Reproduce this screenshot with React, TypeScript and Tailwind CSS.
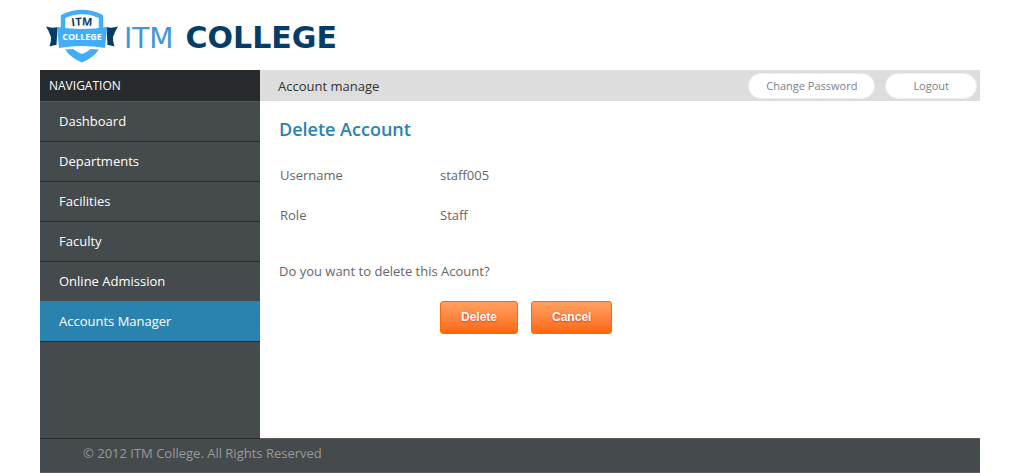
const navItems = [
  { label: 'Dashboard', style: 'border-[#565b5e]' },
  { label: 'Departments', style: 'border-[#272b2e]' },
  { label: 'Facilities', style: 'border-[#272b2e]' },
  { label: 'Faculty', style: 'border-[#272b2e]' },
  { label: 'Online Admission', style: 'border-[#272b2e]' },
  { label: 'Accounts Manager', style: 'border-[#2a83ae] bg-[#2a83ae]', current: true },
];

const details = [
  { label: 'Username', value: 'staff005' },
  { label: 'Role', value: 'Staff' },
];

function Crest() {
  return (
    <svg viewBox="0 0 74 56" className="h-14 w-[74px] shrink-0" aria-hidden="true">
      <path d="M0 18.5 Q6 20.5 11.5 19 L10.5 37 Q7 37 3.5 38.5 Q5.5 33 5 29 Q3 23 0 18.5 Z" fill="#043d68" />
      <path d="M72 18.5 Q66 20.5 60.5 19 L61.5 37 Q65 37 68.5 38.5 Q66.5 33 67 29 Q69 23 72 18.5 Z" fill="#043d68" />
      <path
        d="M17 23 V8.5 Q26 4 36 4 Q46 4 55 8.5 V23"
        fill="#fff"
        stroke="#42aefa"
        strokeWidth="4.5"
        strokeLinejoin="round"
      />
      <path d="M11 19 Q36 23 61 19 L59 40 Q36 36 13 40 Z" fill="#42aefa" />
      <path d="M19 41.5 L27 41 Q31 44 36 46 Q41 44 45 41 L53 41.5 Q47 50 36 54.5 Q25 50 19 41.5 Z" fill="#42aefa" />
      <path id="crest-arc" d="M21 19 Q36 16 51 19" fill="none" />
      <text textAnchor="middle" fill="#173c5e" className="font-['Open_Sans',sans-serif] text-[11px] font-bold">
        <textPath href="#crest-arc" startOffset="50%">
          ITM
        </textPath>
      </text>
      <text x="36" y="32" textAnchor="middle" fill="#fff" className="font-['Open_Sans',sans-serif] text-[9px] font-bold">
        COLLEGE
      </text>
    </svg>
  );
}

function ActionButton({ children }: { children: string }) {
  return (
    <button
      type="button"
      className="h-[33px] rounded-[3px] border border-[#ff6a00] bg-linear-to-b from-[#ffa060] to-[#ff6700] px-5 pb-0.5 font-['Liberation_Sans',sans-serif] text-xs font-bold text-white [text-shadow:0_1px_2px_#e0401a]"
    >
      {children}
    </button>
  );
}

export default function App() {
  return (
    <div className="bg-white px-10 font-['Open_Sans',sans-serif] text-[13px] leading-5 text-[#666]">
      <header className="flex h-[70px] items-start pt-2 pl-1.5">
        <Crest />
        <a href="#" className="flex items-baseline gap-3 pt-3.5 pl-1 font-['DejaVu_Sans',sans-serif] leading-8">
          <span className="text-[28px] text-[#4596d4]">ITM</span>
          <span className="text-[30px] font-bold text-[#043d68]">COLLEGE</span>
        </a>
      </header>

      <div className="flex min-h-[368px]">
        <nav aria-label="Main" className="w-[220px] shrink-0 bg-[#454a4d]">
          <h2 className="h-[31px] bg-[#272b2e] px-[9px] text-xs leading-[31px] text-white">NAVIGATION</h2>
          <ul className="border-b border-[#272b2e]">
            {navItems.map((item) => (
              <li key={item.label} className={`h-10 border-t ${item.style}`}>
                <a
                  href="#"
                  aria-current={item.current ? 'page' : undefined}
                  className="block px-[19px] leading-[39px] text-white"
                >
                  {item.label}
                </a>
              </li>
            ))}
          </ul>
        </nav>

        <main className="flex-1">
          <div className="flex h-[31px] items-center gap-2.5 bg-[#ddd] pr-[3px] pl-[18px]">
            <h1 className="flex-1 text-[#333]">Account manage</h1>
            <button type="button" className="h-[26px] rounded-full border border-[#eee] bg-white px-[17px] text-[11px] text-[#7b808c]">
              Change Password
            </button>
            <button type="button" className="h-[26px] rounded-full border border-[#eee] bg-white px-[27px] text-[11px] text-[#7b808c]">
              Logout
            </button>
          </div>

          <section className="px-[19px] pt-4">
            <h2 className="text-lg leading-6 font-semibold text-[#2a83ae]">Delete Account</h2>
            <dl className="grid grid-cols-[160px_1fr] gap-y-5 pt-6 pl-px">
              {details.map((row) => (
                <div key={row.label} className="contents">
                  <dt>{row.label}</dt>
                  <dd className="font-medium">{row.value}</dd>
                </div>
              ))}
            </dl>
            <p className="pt-9">Do you want to delete this Acount?</p>
            <div className="flex gap-[13px] pt-5 pl-[161px]">
              <ActionButton>Delete</ActionButton>
              <ActionButton>Cancel</ActionButton>
            </div>
          </section>
        </main>
      </div>

      <footer className="flex h-[35px] border-b border-[#5a5d62] bg-[#454a4d]">
        <p className="w-[220px] border-t border-[#272b2e] pt-1 pl-[43px] whitespace-nowrap text-[#999]">
          © 2012 ITM College. All Rights Reserved
        </p>
        <div className="flex-1 border-t border-[#5a5d62]" />
      </footer>
    </div>
  );
}
